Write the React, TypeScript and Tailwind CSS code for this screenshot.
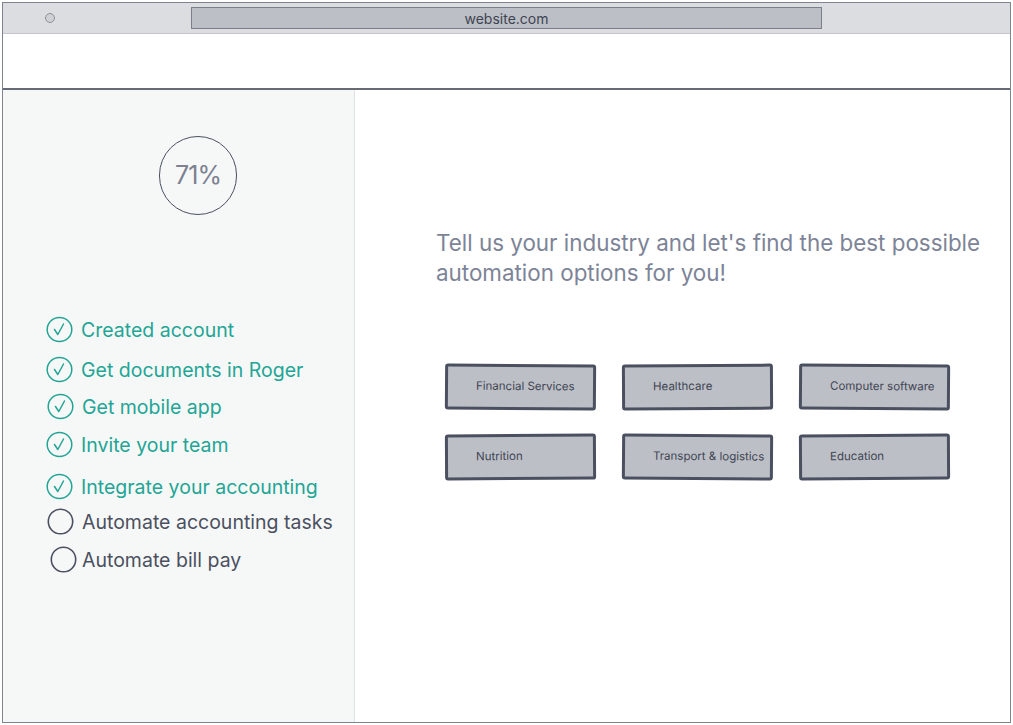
import React from "react";

const steps = [
  { label: "Created account", done: true, cls: "mt-[101px] ml-[43px] gap-[8px]" },
  { label: "Get documents in Roger", done: true, cls: "mt-[13px] ml-[43px] gap-[8px]" },
  { label: "Get mobile app", done: true, cls: "mt-[10px] ml-[44px] gap-[8px]" },
  { label: "Invite your team", done: true, cls: "mt-[11px] ml-[43px] gap-[8px]" },
  { label: "Integrate your accounting", done: true, cls: "mt-[15px] ml-[43px] gap-[8px]" },
  { label: "Automate accounting tasks", done: false, cls: "mt-[8px] ml-[44px] gap-[8px]" },
  { label: "Automate bill pay", done: false, cls: "mt-[11px] ml-[47px] gap-[5px]" },
];

const industries = [
  "Financial Services",
  "Healthcare",
  "Computer software",
  "Nutrition",
  "Transport & logistics",
  "Education",
];

const CheckCircle = ({ done }: { done: boolean }) =>
  done ? (
    <svg width="27" height="27" viewBox="0 0 27 27" fill="none">
      <ellipse cx="13.5" cy="13.5" rx="12.3" ry="12" stroke="#23a595" strokeWidth="1.5" />
      <path d="M8.5 13.5 L11.8 18.5 L17.5 8" stroke="#23a595" strokeWidth="1.5" strokeLinecap="round" strokeLinejoin="round" />
    </svg>
  ) : (
    <svg width="27" height="27" viewBox="0 0 27 27" fill="none">
      <ellipse cx="13.5" cy="13.5" rx="12.2" ry="12.3" stroke="#4b5060" strokeWidth="1.6" />
    </svg>
  );

export default function App() {
  return (
    <div className="w-[1013px] h-[725px] bg-white p-[2px] font-['Inter','Liberation_Sans',sans-serif]">
      <div className="w-full h-full border border-[#80848f] flex flex-col overflow-hidden">
        {/* browser chrome */}
        <div className="h-[31px] bg-[#dcdde1] border-b border-[#c4c6cc] flex items-center shrink-0">
          <div className="ml-[42px] w-[10px] h-[10px] rounded-full border border-[#8d9099] bg-[#cfd1d6]" />
          <div className="ml-[136px] w-[631px] h-[22px] bg-[#bcbfc6] border border-[#7b7f8a] flex items-center justify-center text-[14px] text-[#3f4452]">
            website.com
          </div>
        </div>

        {/* page header */}
        <div className="h-[56px] bg-white border-b-2 border-[#676b76] shrink-0" />

        <div className="flex flex-1 min-h-0">
          {/* sidebar */}
          <aside className="w-[352px] bg-[#f6f8f8] border-r border-[#dfe1e4] flex flex-col shrink-0">
            <div className="mt-[46px] ml-[156px] w-[78px] h-[79px] rounded-full border-[1.5px] border-[#4b5060] flex items-center justify-center pt-[1px] text-[25px] text-[#7c8191] tracking-[-1px]">
              71%
            </div>
            {steps.map((s) => (
              <div key={s.label} className={`flex items-center ${s.cls}`}>
                <CheckCircle done={s.done} />
                <span
                  className={`text-[19.5px] leading-[26px] ${
                    s.done ? "text-[#23a595]" : "text-[#4b5060]"
                  }`}
                >
                  {s.label}
                </span>
              </div>
            ))}
          </aside>

          {/* main content */}
          <main className="flex-1 flex flex-col pt-[138px] pl-[81px]">
            <h1 className="text-[22.4px] leading-[30px] text-[#7d8497] w-[570px]">
              Tell us your industry and let's find the best possible automation options for you!
            </h1>
            <div className="mt-[76px] ml-[9px] grid grid-cols-[151px_151px_151px] gap-x-[26px] gap-y-[24px]">
              {industries.map((name, i) => (
                <div
                  key={name}
                  className={`h-[46px] bg-[#bcbfc6] border-[3px] border-[#4b5060] rounded-[3px] flex items-center pl-[28px] text-[11.5px] text-[#3f4452] ${
                    i % 2 === 0 ? "rotate-[0.4deg]" : "-rotate-[0.3deg]"
                  }`}
                >
                  {name}
                </div>
              ))}
            </div>
          </main>
        </div>
      </div>
    </div>
  );
}
